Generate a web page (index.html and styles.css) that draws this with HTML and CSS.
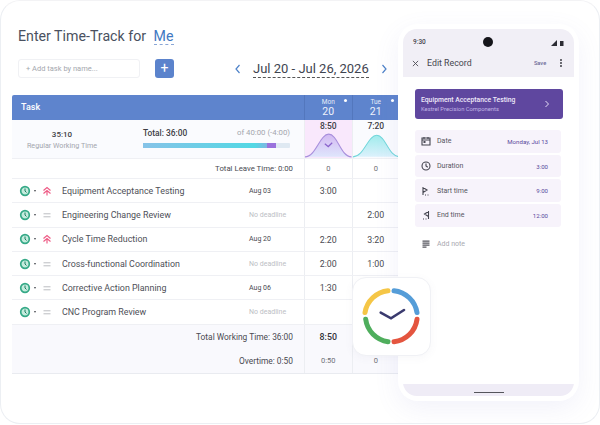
FILE: index.html
```html
<!DOCTYPE html>
<html lang="en">
<head>
    <meta charset="UTF-8">
    <title>Enter Time-Track</title>
    <link rel="stylesheet" href="styles.css">
</head>
<body>
    <div class="frame">
        <div class="page_head">
            <h1 class="title">Enter Time-Track for <span class="title_me">Me</span></h1>
            <div class="toolbar">
                <div class="add_input">+ Add task by name...</div>
                <div class="add_btn">+</div>
                <div class="week_nav">
                    <svg class="nav_arrow" viewBox="0 0 8 10"><path d="M5.500 1 2 5l3.500 4"/></svg>
                    <span class="week_label">Jul 20 - Jul 26, 2026</span>
                    <svg class="nav_arrow" viewBox="0 0 8 10"><path d="M2.500 1 6 5 2.500 9"/></svg>
                </div>
            </div>
        </div>

        <div class="table">
            <div class="row head_row">
                <div class="main_cell head_task">Task</div>
                <div class="day_cell head_day"><span class="day_name">Mon</span><span class="day_num">20</span><i class="day_dot"></i></div>
                <div class="day_cell head_day"><span class="day_name">Tue</span><span class="day_num">21</span><i class="day_dot"></i></div>
            </div>

            <div class="row summary_row">
                <div class="main_cell summary">
                    <div class="regular">
                        <b>35:10</b>
                        <span>Regular Working Time</span>
                    </div>
                    <div class="total">
                        <div class="total_text"><b>Total: 36:00</b><span>of 40:00 (-4:00)</span></div>
                        <div class="progress"><i class="progress_fill"></i><i class="progress_over"></i></div>
                    </div>
                </div>
                <div class="day_cell chart_cell chart_today">
                    <b>8:50</b>
                    <svg class="bell" viewBox="0 0 47 22" preserveAspectRatio="none">
                        <defs><linearGradient id="purple_fill" x1="0" y1="0" x2="0" y2="1"><stop offset="0" stop-color="#d3b9f2"/><stop offset="1" stop-color="#dfe6fc"/></linearGradient></defs>
                        <path d="M0 21C11 21 15 1 24 1S36 21 47 21Z" fill="url(#purple_fill)"/>
                        <path d="M0 21C11 21 15 1 24 1S36 21 47 21" fill="none" stroke="#a88fdc"/>
                        <path d="M20 9.500l3.500 2.500 4-3.500" fill="none" stroke="#8a63cc" stroke-width="1.200"/>
                    </svg>
                </div>
                <div class="day_cell chart_cell">
                    <b>7:20</b>
                    <svg class="bell" viewBox="0 0 47 22" preserveAspectRatio="none">
                        <defs><linearGradient id="teal_fill" x1="0" y1="0" x2="0" y2="1"><stop offset="0" stop-color="#a0ecec"/><stop offset="1" stop-color="#dcf1fc"/></linearGradient></defs>
                        <path d="M0 21C11 21 15 2 24 2S36 21 47 21Z" fill="url(#teal_fill)"/>
                        <path d="M0 21C11 21 15 2 24 2S36 21 47 21" fill="none" stroke="#70d6da"/>
                    </svg>
                </div>
            </div>

            <div class="row leave_row">
                <div class="main_cell right_text leave_text">Total Leave Time: 0:00</div>
                <div class="day_cell small_val">0</div>
                <div class="day_cell small_val">0</div>
            </div>

            <div class="row task_row">
                <div class="main_cell task_main">
                    <svg class="status" viewBox="0 0 12 12"><circle cx="6" cy="6" r="4.300"/><path d="M6 3.500V6l1.500 1.500"/></svg>
                    <i class="caret"></i>
                    <svg class="prio" viewBox="0 0 10 10"><path d="M1.500 4.500 5 1.500l3.500 3M1.500 7.500 5 4.500l3.500 3M5 4.500V9.500"/></svg>
                    <span class="task_name">Equipment Acceptance Testing</span>
                    <span class="deadline">Aug 03</span>
                </div>
                <div class="day_cell hours">3:00</div>
                <div class="day_cell hours"></div>
            </div>
            <div class="row task_row">
                <div class="main_cell task_main">
                    <svg class="status" viewBox="0 0 12 12"><circle cx="6" cy="6" r="4.300"/><path d="M6 3.500V6l1.500 1.500"/></svg>
                    <i class="caret"></i>
                    <svg class="prio prio_normal" viewBox="0 0 10 10"><path d="M1.500 3.800h7M1.500 6.800h7"/></svg>
                    <span class="task_name">Engineering Change Review</span>
                    <span class="deadline deadline_none">No deadline</span>
                </div>
                <div class="day_cell hours"></div>
                <div class="day_cell hours">2:00</div>
            </div>
            <div class="row task_row">
                <div class="main_cell task_main">
                    <svg class="status" viewBox="0 0 12 12"><circle cx="6" cy="6" r="4.300"/><path d="M6 3.500V6l1.500 1.500"/></svg>
                    <i class="caret"></i>
                    <svg class="prio" viewBox="0 0 10 10"><path d="M1.500 4.500 5 1.500l3.500 3M1.500 7.500 5 4.500l3.500 3M5 4.500V9.500"/></svg>
                    <span class="task_name">Cycle Time Reduction</span>
                    <span class="deadline">Aug 20</span>
                </div>
                <div class="day_cell hours">2:20</div>
                <div class="day_cell hours">3:20</div>
            </div>
            <div class="row task_row">
                <div class="main_cell task_main">
                    <svg class="status" viewBox="0 0 12 12"><circle cx="6" cy="6" r="4.300"/><path d="M6 3.500V6l1.500 1.500"/></svg>
                    <i class="caret"></i>
                    <svg class="prio prio_normal" viewBox="0 0 10 10"><path d="M1.500 3.800h7M1.500 6.800h7"/></svg>
                    <span class="task_name">Cross-functional Coordination</span>
                    <span class="deadline deadline_none">No deadline</span>
                </div>
                <div class="day_cell hours">2:00</div>
                <div class="day_cell hours">1:00</div>
            </div>
            <div class="row task_row">
                <div class="main_cell task_main">
                    <svg class="status" viewBox="0 0 12 12"><circle cx="6" cy="6" r="4.300"/><path d="M6 3.500V6l1.500 1.500"/></svg>
                    <i class="caret"></i>
                    <svg class="prio prio_normal" viewBox="0 0 10 10"><path d="M1.500 3.800h7M1.500 6.800h7"/></svg>
                    <span class="task_name">Corrective Action Planning</span>
                    <span class="deadline">Aug 06</span>
                </div>
                <div class="day_cell hours">1:30</div>
                <div class="day_cell hours"></div>
            </div>
            <div class="row task_row">
                <div class="main_cell task_main">
                    <svg class="status" viewBox="0 0 12 12"><circle cx="6" cy="6" r="4.300"/><path d="M6 3.500V6l1.500 1.500"/></svg>
                    <i class="caret"></i>
                    <svg class="prio prio_normal" viewBox="0 0 10 10"><path d="M1.500 3.800h7M1.500 6.800h7"/></svg>
                    <span class="task_name">CNC Program Review</span>
                    <span class="deadline deadline_none">No deadline</span>
                </div>
                <div class="day_cell hours"></div>
                <div class="day_cell hours"></div>
            </div>

            <div class="row foot_row">
                <div class="main_cell right_text">Total Working Time: 36:00</div>
                <div class="day_cell hours"><b>8:50</b></div>
                <div class="day_cell hours"></div>
            </div>
            <div class="row foot_row foot_last">
                <div class="main_cell right_text">Overtime: 0:50</div>
                <div class="day_cell small_val">0:50</div>
                <div class="day_cell small_val">0</div>
            </div>
        </div>

        <div class="app_icon">
            <svg viewBox="0 0 77 77" width="77" height="77">
                <g fill="none" stroke-width="5" stroke-linecap="round">
                    <path d="M12 34.600A26 26 0 0 1 35 12.700" stroke="#f5c646"/>
                    <path d="M41 12.700A26 26 0 0 1 64 34.600" stroke="#559dd8"/>
                    <path d="M64 41.300A26 26 0 0 1 41 63.700" stroke="#e4553f"/>
                    <path d="M35 63.700A26 26 0 0 1 12.700 41.300" stroke="#4fae5d"/>
                    <path d="M27.700 34.700 38 40.300 51 32" stroke="#3a3a6e" stroke-width="2.600"/>
                </g>
            </svg>
        </div>

        <div class="phone">
            <div class="screen">
                <div class="app_bar">
                    <div class="status_bar">
                        <span>9:30</span>
                        <i class="camera"></i>
                        <svg class="signal" viewBox="0 0 14 7"><path d="M0 7 6 1v6Z"/><path d="M9 2h3.500v5H9z"/></svg>
                    </div>
                    <div class="edit_bar">
                        <svg class="close_icon" viewBox="0 0 8 8"><path d="M1 1l6 6M7 1 1 7"/></svg>
                        <span class="edit_title">Edit Record</span>
                        <span class="save">Save</span>
                        <span class="more"><i></i><i></i><i></i></span>
                    </div>
                </div>
                <div class="screen_body">
                    <div class="task_card">
                        <div>
                            <div class="card_title">Equipment Acceptance Testing</div>
                            <div class="card_sub">Kestrel Precision Components</div>
                        </div>
                        <svg class="card_chevron" viewBox="0 0 6 8"><path d="M1.500 1 4.500 4l-3 3"/></svg>
                    </div>
                    <div class="fields">
                        <div class="field">
                            <svg class="field_icon" viewBox="0 0 10 10"><path d="M1 2h8v7H1zM1 4h8M3 1v2M7 1v2" fill="none"/><rect x="2.500" y="5" width="2" height="2" fill="#4a4a55" stroke="none"/></svg>
                            <span class="field_label">Date</span>
                            <span class="field_val">Monday, Jul 13</span>
                        </div>
                        <div class="field">
                            <svg class="field_icon" viewBox="0 0 10 10"><circle cx="5" cy="5" r="4" fill="none"/><path d="M5 2.500V5l1.800 1.200" fill="none"/></svg>
                            <span class="field_label">Duration</span>
                            <span class="field_val">3:00</span>
                        </div>
                        <div class="field">
                            <svg class="field_icon" viewBox="0 0 10 10"><path d="M2 1v8M2 1.500 6 4 2 6.500M4 9h1M6.500 9h1" fill="none"/></svg>
                            <span class="field_label">Start time</span>
                            <span class="field_val">9:00</span>
                        </div>
                        <div class="field">
                            <svg class="field_icon" viewBox="0 0 10 10"><path d="M7.500 1v8M7.500 1.500 3.500 4l4 2.500M2 9h1M4.500 9h1" fill="none"/></svg>
                            <span class="field_label">End time</span>
                            <span class="field_val">12:00</span>
                        </div>
                    </div>
                    <div class="note">
                        <svg class="field_icon note_icon" viewBox="0 0 10 10"><path d="M1.500 2.200h7M1.500 4.200h7M1.500 6.200h7M1.500 8.200h4" fill="none" stroke-width="1.300"/></svg>
                        <span>Add note</span>
                    </div>
                </div>
                <div class="home_bar"><i></i></div>
            </div>
        </div>
    </div>
</body>
</html>
```

FILE: styles.css
```css
* {
    margin: 0;
    padding: 0;
    box-sizing: border-box;
}

body {
    width: 600px;
    height: 425px;
    overflow: hidden;
    background-color: white;
    font-family: Roboto, "Liberation Sans", sans-serif;
    color: #3d3d44;
}

.frame {
    position: relative;
    width: 600px;
    height: 424px;
    padding-top: 25px;
    border: 1px solid #eceff3;
    border-top-color: #f3f3f5;
    border-radius: 20px;
    overflow: hidden;
    background-color: white;
}

.page_head {
    padding-left: 17px;
    height: 69px;
}

.title {
    font-size: 14.200px;
    line-height: 20px;
    font-weight: 400;
    color: #4a5160;
}

.title_me {
    margin-left: 4px;
    color: #3f78c2;
    border-bottom: 1px dashed #8aa6d6;
}

.toolbar {
    display: flex;
    align-items: center;
    margin-top: 13px;
}

.add_input {
    width: 122px;
    height: 19px;
    padding-left: 7px;
    font-size: 7.500px;
    line-height: 18px;
    color: #a4a7ae;
    border: 1px solid #f0f1f4;
    border-radius: 3px;
}

.add_btn {
    width: 19px;
    height: 19px;
    margin-left: 15px;
    background-color: #5b83cc;
    border-radius: 3px;
    color: white;
    font-size: 14px;
    line-height: 18px;
    text-align: center;
}

.week_nav {
    display: flex;
    align-items: center;
    margin-left: 60px;
}

.nav_arrow {
    width: 8px;
    height: 10px;
    fill: none;
    stroke: #4f83c9;
    stroke-width: 1.200;
}

.week_label {
    margin: 0 11px;
    font-size: 13px;
    line-height: 17px;
    color: #3e4450;
    border-bottom: 1px dashed #555;
}

.table {
    margin-left: 11px;
    width: 388px;
}

.row {
    display: flex;
    border-bottom: 1px solid #eff0f4;
}

.main_cell {
    width: 292px;
    flex-shrink: 0;
}

.day_cell {
    position: relative;
    width: 47.500px;
    flex-shrink: 0;
    border-left: 1px solid #eceef2;
    text-align: center;
}

.head_row {
    height: 25px;
    background-color: #5e84cd;
    border-bottom: none;
    border-radius: 2px 2px 0 0;
    color: white;
}

.head_task {
    padding-left: 9px;
    font-size: 9px;
    font-weight: 500;
    line-height: 24px;
}

.head_day {
    display: flex;
    flex-direction: column;
    border-left-color: #5377bd;
    padding-top: 3px;
}

.day_name {
    font-size: 6.500px;
    line-height: 8px;
    color: #e6ecf8;
}

.day_num {
    font-size: 10.500px;
    line-height: 12px;
    color: #eef2fb;
}

.day_dot {
    position: absolute;
    top: 4px;
    right: 5px;
    width: 3px;
    height: 3px;
    border-radius: 50%;
    background-color: white;
}

.summary_row {
    height: 39px;
    background-color: #fafbfe;
}

.summary {
    display: flex;
}

.regular {
    display: flex;
    flex-direction: column;
    width: 131px;
    padding: 9px 31px 0 0;
    text-align: center;
    font-size: 7.200px;
    line-height: 11px;
    color: #a3a5ad;
}

.regular b {
    font-size: 8px;
    font-weight: 500;
    color: #3d3d44;
}

.total {
    width: 147px;
    padding-top: 8px;
}

.total_text {
    display: flex;
    justify-content: space-between;
    font-size: 7.800px;
    line-height: 10px;
    color: #a3a5ad;
}

.total_text b {
    font-size: 8.400px;
    font-weight: 500;
    color: #3d3d44;
}

.progress {
    display: flex;
    height: 5px;
    margin-top: 5px;
    background-color: #dfe9f2;
    border-radius: 1px;
}

.progress_fill {
    width: 124px;
    background: linear-gradient(90deg, #86c3e8, #52d8e4 90%, #7fb6e2);
}

.progress_over {
    width: 9px;
    background-color: #9a72dc;
}

.chart_cell {
    overflow: hidden;
}

.chart_cell b {
    display: block;
    font-size: 8.500px;
    font-weight: 500;
    line-height: 13px;
    color: #3d3d44;
}

.chart_today {
    background-color: #f9e8fc;
}

.bell {
    display: block;
    width: 46.500px;
    height: 25px;
}

.leave_row {
    height: 20px;
}

.right_text {
    padding-right: 11px;
    text-align: right;
    font-size: 8.400px;
    line-height: 24px;
    color: #4a4a52;
}

.leave_text {
    font-size: 7.800px;
    line-height: 19px;
}

.small_val {
    font-size: 7.500px;
    line-height: 20px;
    color: #6f7077;
}

.task_row {
    height: 24.300px;
}

.task_main {
    display: flex;
    align-items: center;
    padding-left: 7px;
}

.status {
    width: 12px;
    height: 12px;
    flex-shrink: 0;
    fill: #c4ecdd;
    stroke: #35a987;
    stroke-width: 1.700;
}

.status path {
    fill: none;
    stroke: #1f7c63;
    stroke-width: 1;
}

.caret {
    width: 0;
    height: 0;
    margin-left: 2.500px;
    border-left: 1.500px solid transparent;
    border-right: 1.500px solid transparent;
    border-top: 2px solid #44474d;
}

.prio {
    width: 10px;
    height: 10px;
    margin-left: 6px;
    flex-shrink: 0;
    fill: none;
    stroke: #ee5c86;
    stroke-width: 1.200;
}

.prio_normal {
    stroke: #b3b5ba;
    stroke-width: 0.900;
}

.task_name {
    width: 187px;
    margin-left: 10.500px;
    flex-shrink: 0;
    font-size: 8.900px;
    color: #4e4f57;
}

.deadline {
    font-size: 7px;
    color: #4a4a52;
    white-space: nowrap;
}

.deadline_none {
    color: #bcbec4;
}

.hours {
    font-size: 8.800px;
    line-height: 24px;
    color: #4a4a52;
}

.hours b {
    font-weight: 500;
    color: #33333a;
}

.foot_row {
    height: 25px;
    background-color: #f9f9fd;
    border-bottom: none;
}

.foot_last {
    height: 24px;
    border-bottom: 1px solid #e9ebf0;
}

.foot_last .right_text {
    line-height: 23px;
}

.foot_last .small_val {
    line-height: 22px;
}

/* app icon sits over the table, phone sits over everything */
.app_icon {
    position: absolute;
    left: 351px;
    top: 276px;
    z-index: 3;
    width: 79px;
    height: 79px;
    background-color: white;
    border: 1px solid #f0f1f5;
    border-radius: 14px;
    box-shadow: 0 2px 8px rgba(90, 90, 140, 0.05);
}

.phone {
    position: absolute;
    left: 397px;
    top: 23px;
    z-index: 2;
    width: 181px;
    height: 377px;
    padding: 5px;
    background-color: white;
    border-radius: 20px;
    box-shadow: 0 8px 26px rgba(110, 110, 200, 0.09);
}

.screen {
    display: flex;
    flex-direction: column;
    height: 100%;
    border-radius: 14px;
    overflow: hidden;
    background-color: white;
}

.app_bar {
    height: 48px;
    background-color: #f1eff6;
}

.status_bar {
    position: relative;
    display: flex;
    justify-content: space-between;
    align-items: center;
    height: 24px;
    padding: 2px 9px 0 10px;
    font-size: 6.500px;
    font-weight: 500;
    color: #44444c;
}

.camera {
    position: absolute;
    left: 80px;
    top: 8px;
    width: 10px;
    height: 10px;
    border-radius: 50%;
    background-color: #15151a;
}

.signal {
    width: 14px;
    height: 7px;
    fill: #2c2c34;
}

.edit_bar {
    display: flex;
    align-items: center;
    height: 20px;
    padding: 0 12px 0 9px;
}

.close_icon {
    width: 7px;
    height: 7px;
    fill: none;
    stroke: #4a4a52;
    stroke-width: 1;
}

.edit_title {
    margin-left: 8px;
    font-size: 8.800px;
    color: #46464e;
}

.save {
    margin-left: auto;
    font-size: 5.700px;
    font-weight: 500;
    color: #6d6a96;
}

.more {
    display: flex;
    flex-direction: column;
    gap: 1px;
    margin-left: 14px;
}

.more i {
    width: 1.800px;
    height: 1.800px;
    background-color: #44444c;
    border-radius: 50%;
}

.screen_body {
    flex: 1;
    padding: 12px 12px 0;
}

.task_card {
    display: flex;
    justify-content: space-between;
    align-items: center;
    height: 30px;
    margin-right: -1px;
    padding: 0 13px 0 6px;
    background-color: #5f479f;
    border-radius: 3px;
}

.card_title {
    font-size: 6.800px;
    font-weight: 500;
    line-height: 10px;
    color: #efeafa;
}

.card_sub {
    font-size: 5.800px;
    line-height: 9px;
    color: #c2b6e6;
}

.card_chevron {
    width: 6px;
    height: 8px;
    fill: none;
    stroke: #e5def6;
    stroke-width: 1;
}

.fields {
    display: flex;
    flex-direction: column;
    gap: 2px;
    margin-top: 11px;
    margin-right: 1px;
}

.field {
    display: flex;
    align-items: center;
    height: 22.700px;
    padding: 0 13px 0 6px;
    background-color: #f7f3fb;
    border-radius: 3px;
}

.field_icon {
    width: 10px;
    height: 10px;
    flex-shrink: 0;
    stroke: #44444f;
    stroke-width: 1.100;
}

.field_label {
    margin-left: 6px;
    font-size: 7px;
    color: #55555e;
}

.field_val {
    margin-left: auto;
    font-size: 6.100px;
    color: #57479c;
}

.note {
    display: flex;
    align-items: center;
    margin-top: 12px;
    padding-left: 6px;
    font-size: 7px;
    color: #a9a9b0;
}

.note span {
    margin-left: 6px;
}

.note_icon {
    stroke: #55555e;
}

.home_bar {
    display: flex;
    justify-content: center;
    align-items: flex-end;
    height: 12px;
    padding-bottom: 3px;
    background-color: #efecf6;
}

.home_bar i {
    width: 30px;
    height: 1px;
    background-color: #55555c;
}
```
